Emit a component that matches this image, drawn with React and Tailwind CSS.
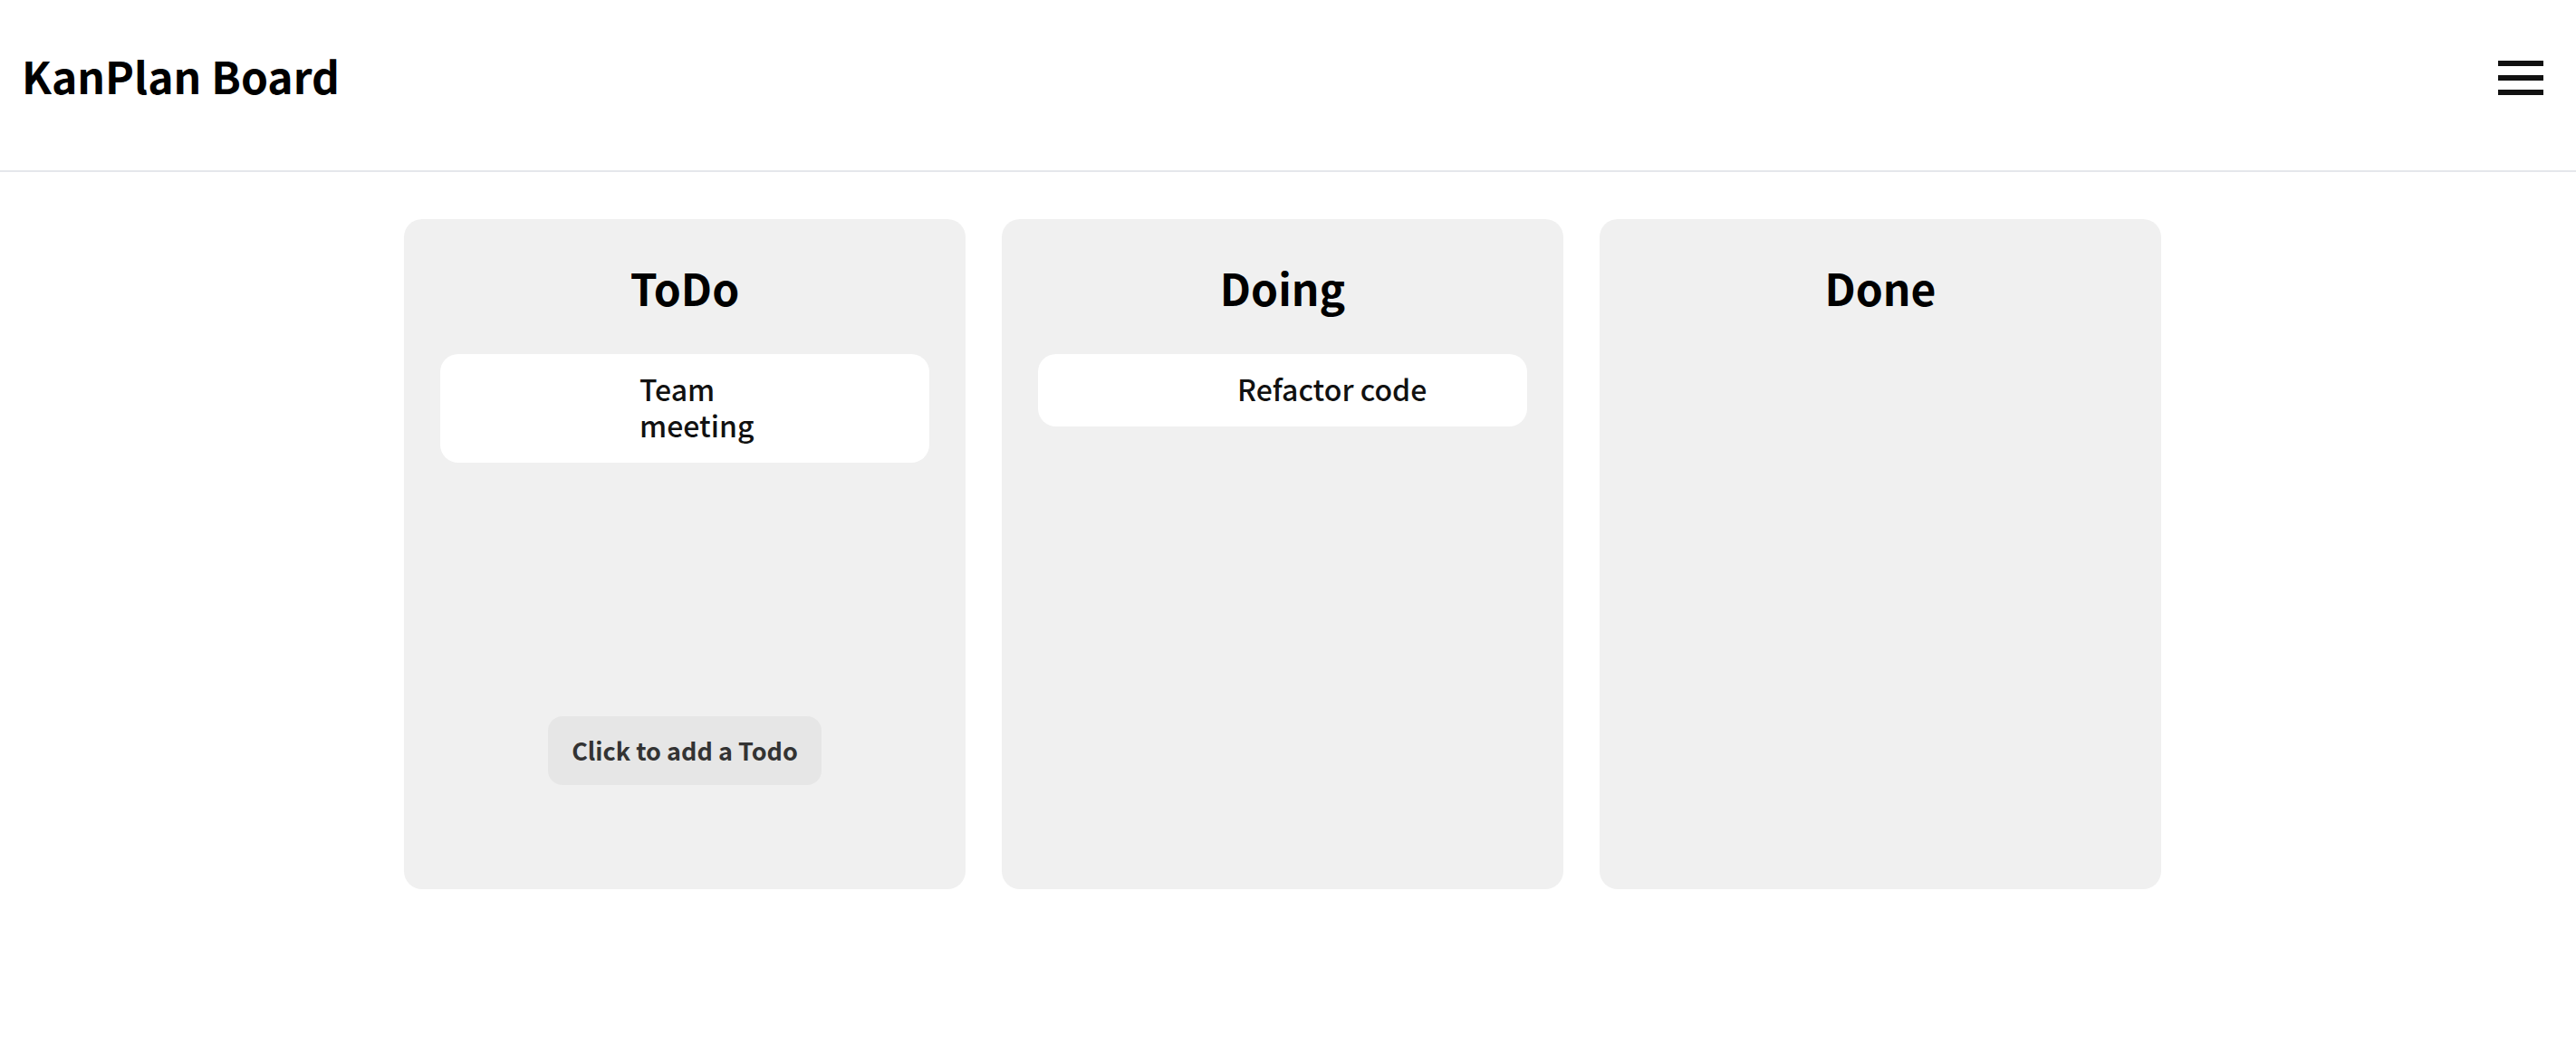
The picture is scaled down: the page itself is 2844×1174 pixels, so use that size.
const columns = [
  { title: 'ToDo', tasks: ['Team meeting'], canAdd: true },
  { title: 'Doing', tasks: ['Refactor code'] },
  { title: 'Done', tasks: [] },
];

function Task({ children }) {
  return (
    <li className="grid grid-cols-[220px_216px_1fr] rounded-[20px] bg-white pt-[18px] pb-[22px]">
      <p className="col-start-2 text-[32px] leading-10 font-medium text-[#111111]">{children}</p>
    </li>
  );
}

function Column({ title, tasks, canAdd }) {
  return (
    <section className="flex min-h-[740px] flex-1 flex-col rounded-[20px] bg-[#f0f0f0] px-10 pt-10">
      <h2 className="mb-[39px] text-center text-[48px] leading-[70px] font-bold">{title}</h2>
      <ul className="flex flex-col gap-5">
        {tasks.map((task) => (
          <Task key={task}>{task}</Task>
        ))}
      </ul>
      {canAdd && (
        <button
          type="button"
          className="mt-auto mb-[115px] self-center rounded-2xl bg-[#e6e6e6] px-[26px] py-[18px] text-[27px] leading-10 font-bold text-[#333333]"
        >
          Click to add a Todo
        </button>
      )}
    </section>
  );
}

export default function App() {
  return (
    <div className="min-h-screen bg-white font-['Noto_Sans_CJK_SC','Open_Sans',sans-serif] text-black">
      <header className="flex items-start justify-between border-b-2 border-gray-200 pt-12 pr-9 pb-[70px] pl-6">
        <h1 className="text-[48px] leading-[70px] font-bold">KanPlan Board</h1>
        <button type="button" aria-label="Menu" className="mt-[19px] flex w-[50px] flex-col gap-2.5">
          <span className="h-1.5 w-full bg-[#111111]" />
          <span className="h-1.5 w-full bg-[#111111]" />
          <span className="h-1.5 w-full bg-[#111111]" />
        </button>
      </header>
      <main className="pt-[52px] pr-3">
        <div className="mx-auto flex max-w-[1940px] gap-10">
          {columns.map((column) => (
            <Column key={column.title} {...column} />
          ))}
        </div>
      </main>
    </div>
  );
}
